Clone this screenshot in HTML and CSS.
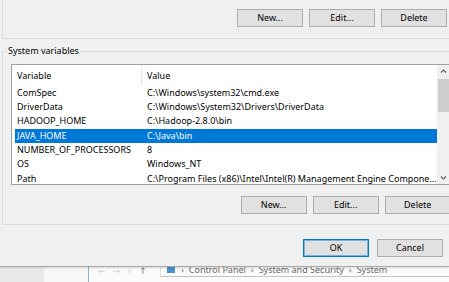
FILE: index.html
```html
<!DOCTYPE html>
<html>
<head>
<meta charset="utf-8">
<link rel="stylesheet" href="styles.css">
</head>
<body>
<div class="dialog">
  <div class="user-group">
    <div class="btn-row">
      <button class="btn">New...</button>
      <button class="btn">Edit...</button>
      <button class="btn">Delete</button>
    </div>
  </div>
  <fieldset class="sys-group">
    <legend>System variables</legend>
    <div class="list">
      <div class="list-body">
        <div class="hdr"><span class="c1">Variable</span><span class="c2">Value</span></div>
        <div class="row"><span class="c1">ComSpec</span><span class="c2">C:\Windows\system32\cmd.exe</span></div>
        <div class="row"><span class="c1">DriverData</span><span class="c2">C:\Windows\System32\Drivers\DriverData</span></div>
        <div class="row"><span class="c1">HADOOP_HOME</span><span class="c2">C:\Hadoop-2.8.0\bin</span></div>
        <div class="row sel"><span class="c1">JAVA_HOME</span><span class="c2">C:\Java\bin</span></div>
        <div class="row"><span class="c1">NUMBER_OF_PROCESSORS</span><span class="c2">8</span></div>
        <div class="row"><span class="c1">OS</span><span class="c2">Windows_NT</span></div>
        <div class="row"><span class="c1">Path</span><span class="c2">C:\Program Files (x86)\Intel\Intel(R) Management Engine Compone...</span></div>
      </div>
      <div class="scrollbar">
        <svg class="arrow" width="13" height="12" viewBox="0 0 13 12"><path d="M4 7.5 L6.5 5 L9 7.5" fill="none" stroke="#606060" stroke-width="1.2"/></svg>
        <div class="track"><div class="thumb"></div></div>
        <svg class="arrow" width="13" height="12" viewBox="0 0 13 12"><path d="M4 4.5 L6.5 7 L9 4.5" fill="none" stroke="#606060" stroke-width="1.2"/></svg>
      </div>
    </div>
    <div class="btn-row">
      <button class="btn">New...</button>
      <button class="btn">Edit...</button>
      <button class="btn">Delete</button>
    </div>
  </fieldset>
  <div class="footer">
    <button class="btn default">OK</button>
    <button class="btn">Cancel</button>
  </div>
</div>
<div class="bgwin">
  <div class="side-a"></div>
  <div class="side-b"></div>
  <div class="main">
    <div class="nav">
      <span class="nav-arrow faint">←</span>
      <span class="nav-arrow faint">→</span>
      <span class="nav-arrow faint small">∨</span>
      <span class="nav-arrow dark">↑</span>
    </div>
    <div class="address">
      <svg class="addr-icon" width="10" height="8" viewBox="0 0 10 8"><rect x="1" y="0" width="8" height="6" fill="#4a8fd0"/></svg>
      <span class="crumb">›</span><span class="crumb">Control Panel</span>
      <span class="crumb">›</span><span class="crumb">System and Security</span>
      <span class="crumb">›</span><span class="crumb">System</span>
    </div>
  </div>
</div>
</body>
</html>
```
FILE: styles.css
```css
html, body {
  margin: 0;
  padding: 0;
}
body {
  width: 449px;
  height: 282px;
  overflow: hidden;
  background: #f0f0f0;
  font-family: "Noto Sans", "Open Sans", sans-serif;
  font-size: 9px;
  color: #000;
}
.dialog {
  height: 267px;
  box-sizing: border-box;
  background: #f0f0f0;
  border-bottom: 1px solid #a9a9a9;
  overflow: hidden;
  position: relative;
  z-index: 1;
  box-shadow: 0 1px 2px rgba(0,0,0,0.15);
}
.user-group {
  margin: 0 -12px 0 2px;
  border-left: 1px solid #dcdcdc;
  border-bottom: 1px solid #dcdcdc;
  padding: 9px 0 11px 0;
}
.btn-row {
  display: flex;
  justify-content: flex-end;
  gap: 6px;
  padding-right: 14px;
}
.btn {
  width: 66px;
  height: 18px;
  box-sizing: border-box;
  margin: 0;
  padding: 0;
  background: #e1e1e1;
  border: 1px solid #adadad;
  font-family: "Noto Sans", "Open Sans", sans-serif;
  font-size: 9px;
  color: #000;
  line-height: 16px;
}
.sys-group {
  margin: 5px -12px 0 2px;
  padding: 0 14px 10px 8px;
  border: 1px solid #dcdcdc;
  border-right: none;
}
.sys-group legend {
  padding: 0 1px;
  margin-left: -4px;
  line-height: 14px;
  font-size: 9px;
}
.list {
  margin-top: 6px;
  height: 121px;
  box-sizing: border-box;
  border: 1px solid #a0a0a0;
  background: #fff;
  display: flex;
  padding-left: 3px;
}
.list-body {
  flex: 1;
  overflow: hidden;
}
.hdr, .row {
  display: flex;
  white-space: nowrap;
}
.hdr {
  height: 20.5px;
  align-items: center;
}
.hdr .c1 {
  border-right: 1px solid #e5e5e5;
  height: 100%;
  display: flex;
  align-items: center;
}
.row {
  height: 14.4px;
  line-height: 14.4px;
}
.c1 {
  width: 127px;
  box-sizing: border-box;
  padding-left: 2px;
  flex: none;
}
.c2 {
  padding-left: 5px;
}
.row.sel {
  background: #0078d7;
  color: #fff;
}
.scrollbar {
  width: 13px;
  flex: none;
  background: #f0f0f0;
  display: flex;
  flex-direction: column;
}
.arrow {
  display: block;
  flex: none;
}
.track {
  flex: 1;
  padding-top: 2px;
}
.thumb {
  height: 33px;
  margin: 0 1px;
  background: #cdcdcd;
}
.sys-group .btn-row {
  margin-top: 11px;
  padding-right: 0;
}
.footer {
  display: flex;
  justify-content: flex-end;
  gap: 8px;
  padding: 14px 6px 0 0;
}
.btn.default {
  border-color: #0078d7;
  box-shadow: inset 0 0 0 1px rgba(0,120,215,0.45);
}
.bgwin {
  height: 15px;
  display: flex;
  background: #fbfbfb;
  overflow: hidden;
}
.side-a {
  width: 44px;
  background: #e8e8e8;
}
.side-b {
  width: 44px;
  background: #f7f7f7;
  border-right: 1px solid #8fb0d6;
}
.main {
  flex: 1;
  display: flex;
}
.nav {
  display: flex;
  align-items: flex-start;
  gap: 7px;
  padding-left: 9px;
  width: 62px;
  margin-top: -2px;
}
.nav-arrow {
  font-family: "DejaVu Sans", sans-serif;
  font-size: 9px;
  line-height: 12px;
}
.faint { color: #d0d0d0; }
.dark { color: #777; }
.small { font-size: 7px; }
.address {
  flex: 1;
  height: 9px;
  border-bottom: 1px solid #c4c4c4;
  border-left: 1px solid #dedede;
  display: flex;
  align-items: flex-end;
  gap: 5px;
  padding-left: 5px;
  font-size: 9px;
  color: #6a6a6a;
  white-space: nowrap;
  overflow: hidden;
}
.crumb {
  line-height: 14px;
  margin-bottom: -1px;
}
.addr-icon {
  flex: none;
  margin-bottom: 1px;
}
```
